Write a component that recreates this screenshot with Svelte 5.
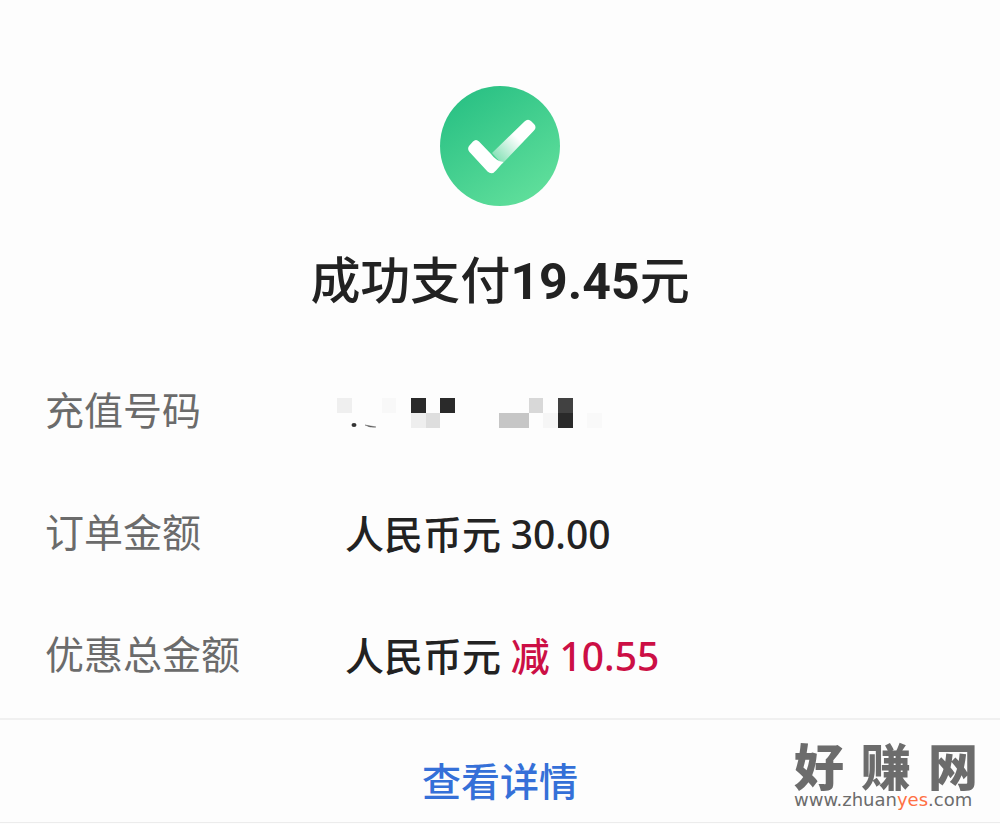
<script lang="ts">
    type Block = { x: number; y: number; w: number; h: number; fill: string };

    const rows = [
        { label: '订单金额', currency: '人民币元', amount: '30.00', off: false },
        { label: '优惠总金额', currency: '人民币元', amount: '10.55', off: true },
    ];

    // mosaic that hides the phone number
    const blocks: Block[] = [
        { x: 0, y: 0, w: 15, h: 15, fill: '#efefef' },
        { x: 45, y: 0, w: 14, h: 15, fill: '#f8f8f8' },
        { x: 74, y: 0, w: 15, h: 15, fill: '#2a2a2a' },
        { x: 103, y: 0, w: 15, h: 15, fill: '#2a2a2a' },
        { x: 74, y: 15, w: 15, h: 15, fill: '#eeeeee' },
        { x: 89, y: 15, w: 14, h: 15, fill: '#dedede' },
        { x: 162, y: 15, w: 30, h: 15, fill: '#c6c6c6' },
        { x: 192, y: 0, w: 14, h: 15, fill: '#d8d8d8' },
        { x: 206, y: 15, w: 15, h: 15, fill: '#f6f6f6' },
        { x: 221, y: 0, w: 15, h: 15, fill: '#414141' },
        { x: 221, y: 15, w: 15, h: 15, fill: '#2a2a2a' },
        { x: 250, y: 15, w: 15, h: 15, fill: '#f9f9f9' },
    ];
</script>

<main class="page">
    <section class="result">
        <svg class="check" viewBox="0 0 120 120" aria-hidden="true">
            <defs>
                <linearGradient id="disc" x1="0.2" y1="0.1" x2="0.8" y2="1">
                    <stop offset="0" stop-color="#2cc285" />
                    <stop offset="1" stop-color="#62e09c" />
                </linearGradient>
                <linearGradient id="arm" gradientUnits="userSpaceOnUse" x1="54" y1="74" x2="84" y2="43">
                    <stop offset="0" stop-color="#fff" stop-opacity="0.3" />
                    <stop offset="0.75" stop-color="#fff" />
                </linearGradient>
            </defs>
            <circle cx="60" cy="60" r="60" fill="url(#disc)" />
            <path
                d="M84.500 35.500Q88 32 91.500 35.500L94 38Q97 41 94 44.500L62 78L52 67Z"
                fill="url(#arm)"
            />
            <path
                d="M29 60L33 55.500Q36 52.500 39 55.500L51 68Q56 75 63.500 76L56 84.500Q52 89.500 47.500 85.500L29.500 66Q27 63 29 60Z"
                fill="#fff"
            />
        </svg>
        <h1>成功支付<b>19.45</b>元</h1>
    </section>

    <dl class="details">
        <dt>充值号码</dt>
        <dd class="masked">
            <svg class="mosaic" viewBox="0 0 266 30" role="img" aria-label="号码已隐藏">
                {#each blocks as b}
                    <rect x={b.x} y={b.y} width={b.w} height={b.h} fill={b.fill} />
                {/each}
                <ellipse cx="17" cy="27" rx="2.500" ry="2" fill="#333" />
                <path d="M28 27Q33 30 39 29Q34 28 28 27Z" fill="#444" stroke="#777" stroke-width="0.500" />
            </svg>
        </dd>
        {#each rows as row (row.label)}
            <dt>{row.label}</dt>
            <dd>
                {row.currency}
                {#if row.off}
                    <span class="off">减 <span class="num">{row.amount}</span></span>
                {:else}
                    <span class="num">{row.amount}</span>
                {/if}
            </dd>
        {/each}
    </dl>

    <footer class="footer">
        <a class="more" href="#details">查看详情</a>
        <div class="mark">
            <div class="mark-name"><span>好</span><span>赚</span><span>网</span></div>
            <div class="mark-url">www.zhuan<em>yes</em>.com</div>
        </div>
    </footer>
</main>

<style>
    :global(body) {
        margin: 0;
        background: #fdfdfd;
    }

    .page {
        color: #222;
        font-family: Roboto, "Noto Sans CJK SC", sans-serif;
    }

    .result {
        display: flex;
        flex-direction: column;
        align-items: center;
        padding-top: 86px;
    }

    .check {
        width: 120px;
        height: 120px;
    }

    h1 {
        margin: 42px 0 0;
        font-size: 50px;
        line-height: 68px;
        font-weight: 500;
    }

    h1 b { font-weight: 700; }

    .details {
        display: grid;
        grid-template-columns: 300px 1fr;
        grid-auto-rows: minmax(58px, auto);
        row-gap: 64px;
        margin: 0;
        padding: 68px 45px 32px;
        font-size: 39px;
        line-height: 56px;
    }

    dt {
        color: #6b6b6b;
        white-space: nowrap;
    }

    dd {
        margin: 0;
        padding-top: 2px;
        font-weight: 500;
        white-space: nowrap;
    }

    .masked {
        display: flex;
        align-items: center;
        padding-top: 0;
    }

    .mosaic {
        width: 266px;
        height: 30px;
        margin-left: -8px;
    }

    .num {
        font-family: "Noto Sans", sans-serif;
        line-height: 1;
    }

    .off { color: #cc0f45; }

    .footer {
        position: relative;
        display: flex;
        justify-content: center;
        padding: 35px 0 11px;
        border-top: 2px solid #f0f0f0;
        border-bottom: 1px solid #ececec;
    }

    .more {
        color: #3570d8;
        font-size: 39px;
        line-height: 56px;
        font-weight: 500;
        text-decoration: none;
    }

    /* site watermark over the corner */
    .mark {
        position: absolute;
        right: 22px;
        bottom: 12px;
        width: 184px;
        color: #6c6c6c;
    }

    .mark-name {
        display: flex;
        justify-content: space-between;
        font-family: "Noto Sans CJK SC", sans-serif;
        font-size: 50px;
        line-height: 52px;
        font-weight: 900;
    }

    .mark-url {
        font-family: "DejaVu Sans", sans-serif;
        font-size: 18px;
        line-height: 20px;
        white-space: nowrap;
    }

    .mark-url em {
        color: #ff7043;
        font-style: normal;
    }
</style>
